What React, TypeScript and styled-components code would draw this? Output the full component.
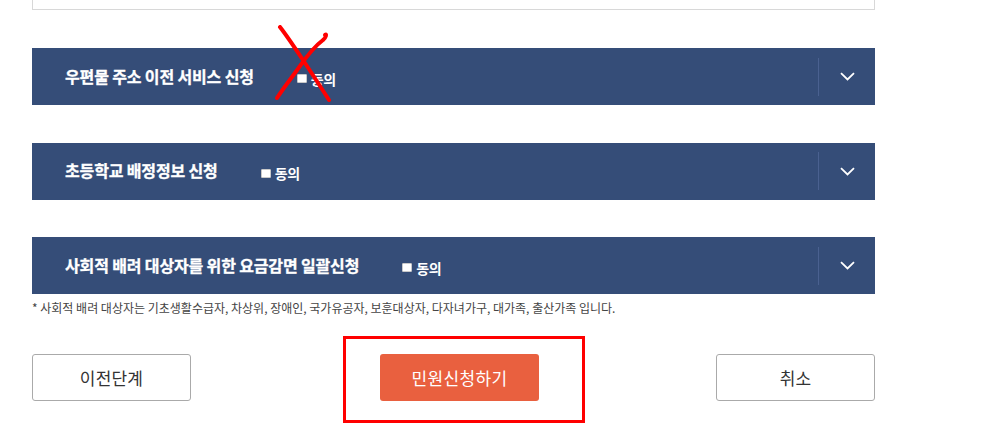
import styled, { createGlobalStyle } from "styled-components";

const GlobalStyle = createGlobalStyle`
  html, body {
    margin: 0;
    padding: 0;
    background: #fff;
  }
  body {
    font-family: "Noto Sans CJK KR", "Noto Sans", sans-serif;
    color: #333;
  }
`;

const terms = [
  { id: "post", title: "우편물 주소 이전 서비스 신청", crossed: true },
  { id: "school", title: "초등학교 배정정보 신청", crossed: false },
  { id: "discount", title: "사회적 배려 대상자를 위한 요금감면 일괄신청", crossed: false },
];

const Chevron = () => (
  <svg width="15" height="9" viewBox="0 0 15 9" fill="none">
    <path d="M1 1.2L7.5 7.5L14 1.2" stroke="#fff" strokeWidth="1.8" />
  </svg>
);

const RedCross = () => (
  <CrossMark width="70" height="78" viewBox="0 0 70 78" fill="none">
    <path
      d="M7 2C14 11 22 23 30 35C38 47 47 61 56 75"
      stroke="#ff0000"
      strokeWidth="4"
      strokeLinecap="round"
    />
    <path
      d="M52 10C54 8 53 13 50 15C42 21 34 31 27 41C20 51 11 62 4 73"
      stroke="#ff0000"
      strokeWidth="4"
      strokeLinecap="round"
    />
  </CrossMark>
);

const App = () => {
  return (
    <Page>
      <GlobalStyle />
      <TopBox />

      <TermList>
        {terms.map((term) => (
          <TermBar key={term.id}>
            <TermHead>
              <TermTitle>{term.title}</TermTitle>
              <Agree>
                <AgreeBox />
                동의
                {term.crossed && <RedCross />}
              </Agree>
            </TermHead>
            <ToggleArea>
              <Chevron />
            </ToggleArea>
          </TermBar>
        ))}
      </TermList>

      <Note>
        * 사회적 배려 대상자는 기초생활수급자, 차상위, 장애인, 국가유공자,
        보훈대상자, 다자녀가구, 대가족, 출산가족 입니다.
      </Note>

      <ButtonRow>
        <LineButton>이전단계</LineButton>
        <SubmitWrap>
          <SubmitButton>민원신청하기</SubmitButton>
        </SubmitWrap>
        <LineButton $push>취소</LineButton>
      </ButtonRow>
    </Page>
  );
};

const Page = styled.div`
  width: 843px;
  padding: 0 0 0 32px;
  height: 425px;
  overflow: hidden;
`;

const TopBox = styled.div`
  height: 9px;
  border: 1px solid #d8d8d8;
  border-top: none;
  background: #fff;
`;

const TermList = styled.div`
  display: flex;
  flex-direction: column;
  gap: 37.5px;
  margin-top: 38px;
`;

const TermBar = styled.div`
  height: 57px;
  background: #354d78;
  display: flex;
  align-items: center;
`;

const TermHead = styled.div`
  flex: 1;
  display: flex;
  align-items: center;
  gap: 43px;
  padding-left: 33px;
`;

const TermTitle = styled.div`
  color: #fff;
  font-size: 16px;
  font-weight: 700;
  letter-spacing: -0.15px;
  line-height: 20px;
  margin-top: -2px;
  -webkit-text-stroke: 0.3px #fff;
`;

const Agree = styled.div`
  position: relative;
  display: flex;
  align-items: center;
  gap: 4px;
  color: #fff;
  font-size: 14px;
  font-weight: 700;
  letter-spacing: -0.3px;
  line-height: 18px;
  margin-top: 4px;
`;

const AgreeBox = styled.span`
  width: 10px;
  height: 9px;
  background: #fff;
  border: 1px solid #c9c9c9;
  box-sizing: border-box;
  border-radius: 1px;
`;

const CrossMark = styled.svg`
  position: absolute;
  left: -24px;
  top: -45px;
  pointer-events: none;
`;

const ToggleArea = styled.div`
  width: 56px;
  height: 38px;
  border-left: 1px solid #4a6190;
  display: flex;
  align-items: center;
  justify-content: center;
`;

const Note = styled.p`
  margin: 6px 0 0;
  font-size: 12px;
  line-height: 15px;
  letter-spacing: 0px;
  color: #444;
`;

const ButtonRow = styled.div`
  display: flex;
  align-items: center;
  margin-top: 39px;
`;

const LineButton = styled.button<{ $push?: boolean }>`
  width: 159px;
  height: 47px;
  margin-left: ${({ $push }) => ($push ? "auto" : "0")};
  border: 1px solid #aaa;
  border-radius: 3px;
  background: #fff;
  color: #333;
  font-family: "Noto Sans CJK KR", sans-serif;
  font-size: 17px;
  letter-spacing: 0.2px;
`;

const SubmitWrap = styled.div`
  position: relative;
  margin-left: 189px;
  &::after {
    content: "";
    position: absolute;
    left: -37px;
    right: -46px;
    top: -18px;
    bottom: -22px;
    border: 3px solid #ff0000;
    pointer-events: none;
  }
`;

const SubmitButton = styled.button`
  width: 159px;
  height: 47px;
  border: none;
  border-radius: 3px;
  background: #e9603f;
  color: #fff;
  font-family: "Noto Sans CJK KR", sans-serif;
  font-size: 17px;
  letter-spacing: 0.4px;
`;

export default App;
